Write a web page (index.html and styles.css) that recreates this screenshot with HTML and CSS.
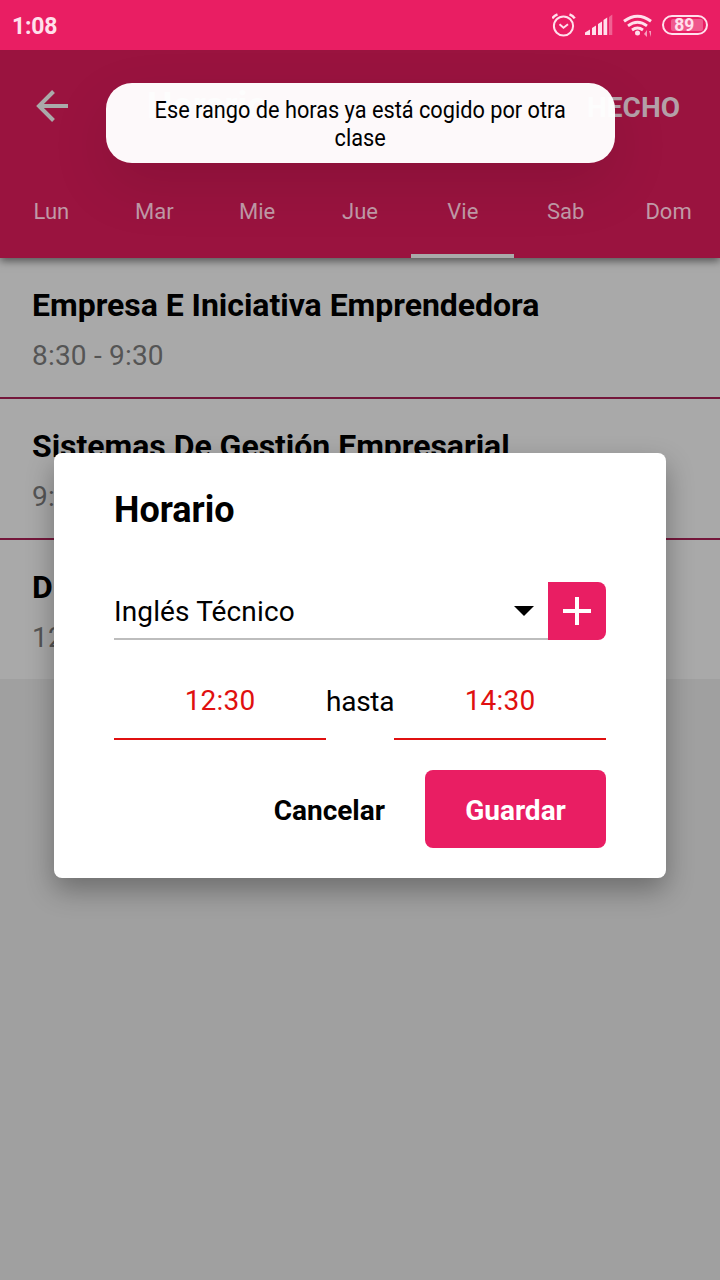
FILE: index.html
```html
<!DOCTYPE html>
<html lang="es">
<head>
<meta charset="utf-8">
<title>Horario</title>
<link rel="stylesheet" href="styles.css">
</head>
<body>
<div class="status">
  <span class="clock">1:08</span>
  <svg class="status-icons" width="164" height="50" viewBox="0 0 164 50" fill="none" stroke="#ffe0ec">
    <circle cx="11.500" cy="26" r="9.600" stroke-width="2"/>
    <path d="M7.500 24.300l4 3.400 4.500-3.400" stroke-width="2"/>
    <path d="M.3 18.400Q2 15.600 5.500 14.300M22.700 18.400Q21 15.600 17.500 14.300" stroke-width="2.400"/>
    <g stroke="none" fill="#ffe0ec">
      <path d="M33 35v-2.500l5-3V35zM40 35v-7l4-2.500V35zM46 35V24l4-2.500V35zM51.500 35V20l3.700-2.500V35z"/>
      <path d="M57 35V17l3.300-2.500V35z" opacity=".35"/>
      <circle cx="85.500" cy="33" r="2.500"/>
      <path d="M92 34l3-4v7zM97 31h2v6z" opacity=".65"/>
    </g>
    <path d="M72 21.300q13.500-10 27 0" stroke-width="3"/>
    <path d="M76 25.800q9.500-7 19 0M80 30q5.500-4 11 0" stroke-width="2.800"/>
    <rect x="111" y="16" width="44" height="18" rx="9" stroke-width="2"/>
    <rect x="119" y="19" width="32" height="12" rx="2" fill="#ffe0ec" opacity=".3" stroke="none"/>
    <text class="battery" x="132.300" y="31.300" text-anchor="middle">89</text>
  </svg>
</div>
<header class="header">
  <div class="bar">
    <svg class="back" width="34" height="34" viewBox="0 0 34 34" fill="none" stroke="#aaa" stroke-width="4"><path d="M33 17H4M18.500 2.500L4 17l14.500 14.500"/></svg>
    <span class="bar-title">Horario</span>
    <span class="done">HECHO</span>
  </div>
  <nav class="tabs">
    <span class="tab">Lun</span><span class="tab">Mar</span><span class="tab">Mie</span><span class="tab">Jue</span><span class="tab active">Vie</span><span class="tab">Sab</span><span class="tab">Dom</span>
  </nav>
</header>
<main class="list">
  <div class="item"><div class="name">Empresa E Iniciativa Emprendedora</div><div class="hours">8:30 - 9:30</div></div>
  <div class="item"><div class="name">Sistemas De Gestión Empresarial</div><div class="hours">9:</div></div>
  <div class="item"><div class="name">D</div><div class="hours">12</div></div>
</main>
<section class="dialog">
  <h1 class="dialog-title">Horario</h1>
  <div class="subject">
    <div class="select"><span>Inglés Técnico</span><svg width="20" height="10" viewBox="0 0 20 10"><path d="M0 0h20L10 10z"/></svg></div>
    <div class="add"><svg width="28" height="28" viewBox="0 0 28 28" stroke="#fff" stroke-width="4"><path d="M0 14h28M14 0v28"/></svg></div>
  </div>
  <div class="times">
    <div class="time">12:30</div><div class="until">hasta</div><div class="time">14:30</div>
  </div>
  <div class="actions"><span class="cancel">Cancelar</span><span class="save">Guardar</span></div>
</section>
<div class="toast"><div class="toast-text">Ese rango de horas ya está cogido por otra<br>clase</div></div>
</body>
</html>
```
FILE: styles.css
```css
* { box-sizing: border-box; }
body {
  margin: 0;
  width: 720px;
  height: 1280px;
  overflow: hidden;
  position: relative;
  background: #a0a0a0;
  font-family: Roboto, sans-serif;
}
svg { display: block; flex: none; }
.status {
  position: relative;
  z-index: 2;
  height: 50px;
  padding: 0 4px 0 12px;
  display: flex;
  align-items: center;
  justify-content: space-between;
  background: #e91e63;
}
.clock { color: #ffe0ec; font-size: 23px; font-weight: 700; padding-top: 2px; letter-spacing: -.2px; }
.battery { fill: #ffe0ec; stroke: none; font-size: 17.5px; font-weight: 700; }
.header {
  position: relative;
  height: 208px;
  background: #9a133f;
  box-shadow: 0 3px 8px rgba(0, 0, 0, .5);
}
.bar { height: 112px; padding: 0 40px 0 35px; display: flex; align-items: center; }
.bar-title { margin-left: 78px; font-size: 36px; font-weight: 700; color: #aaa; }
.done { margin-left: auto; padding-top: 3px; font-size: 28px; font-weight: 700; color: #b4a0a8; }
.tabs { height: 96px; display: grid; grid-template-columns: repeat(7, 1fr); }
.tab {
  border-bottom: 4px solid transparent;
  padding-top: 37px;
  text-align: center;
  font-size: 22px;
  line-height: 26px;
  color: #c09aa7;
}
.tab.active { border-color: #aaa; }
.list { background: #a9a9a9; }
.item { height: 141px; padding: 28px 32px 0; border-bottom: 2px solid #74173b; }
.item:last-child { height: 139px; border: 0; }
.name { font-size: 32px; line-height: 38px; font-weight: 700; white-space: nowrap; letter-spacing: -.03px; }
.hours { margin-top: 15px; font-size: 28px; line-height: 34px; color: #555; letter-spacing: .2px; }
.dialog {
  position: absolute;
  left: 54px;
  top: 453px;
  width: 612px;
  height: 425px;
  padding: 36px 60px 30px;
  border-radius: 8px;
  background: #fff;
  box-shadow: 0 12px 28px rgba(0, 0, 0, .32);
}
.dialog-title { margin: 0 0 51px; font-size: 36px; line-height: 42px; font-weight: 700; }
.subject { display: flex; height: 58px; }
.select {
  flex: 1;
  padding: 2px 14px 0 0;
  display: flex;
  align-items: center;
  justify-content: space-between;
  border-bottom: 2px solid #bdbdbd;
  font-size: 28px;
  letter-spacing: .12px;
}
.add {
  width: 58px;
  display: grid;
  place-items: center;
  background: #e91e63;
  border-radius: 0 8px 8px 0;
}
.times { display: flex; height: 100px; font-size: 28px; line-height: 34px; }
.time { flex: 1; padding-top: 44px; text-align: center; color: #e01010; border-bottom: 2px solid #e01010; letter-spacing: .2px; }
.until { width: 68px; padding-top: 45px; text-align: center; letter-spacing: -.25px; }
.actions {
  margin-top: 30px;
  display: flex;
  justify-content: flex-end;
  align-items: center;
  gap: 40px;
  font-size: 28px;
  font-weight: 700;
}
.cancel { padding-top: 2px; }
.save {
  width: 181px;
  line-height: 78px;
  padding-top: 2px;
  height: 78px;
  text-align: center;
  color: #fff;
  background: #e91e63;
  border-radius: 8px;
}
.toast {
  position: absolute;
  left: 106px;
  top: 83px;
  width: 509px;
  height: 80px;
  padding-top: 13px;
  display: flex;
  justify-content: center;
  border-radius: 26px;
  background: rgba(255, 255, 255, .975);
  box-shadow: 0 22px 60px rgba(0, 0, 0, .1);
}
.toast-text {
  flex: none;
  text-align: center;
  white-space: nowrap;
  font-size: 24px;
  line-height: 28px;
  transform: scaleX(.905);
}
```
